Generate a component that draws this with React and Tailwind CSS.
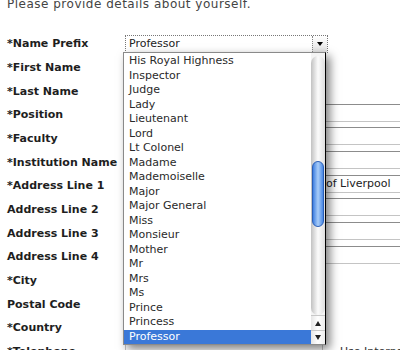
import React from "react";

const items = [
  "His Royal Highness",
  "Inspector",
  "Judge",
  "Lady",
  "Lieutenant",
  "Lord",
  "Lt Colonel",
  "Madame",
  "Mademoiselle",
  "Major",
  "Major General",
  "Miss",
  "Monsieur",
  "Mother",
  "Mr",
  "Mrs",
  "Ms",
  "Prince",
  "Princess",
  "Professor",
];

const rows = [
  { label: "*Name Prefix", kind: "select" },
  { label: "*First Name", w: "w-[198px]" },
  { label: "*Last Name", w: "w-[198px]" },
  { label: "*Position", w: "w-[300px]" },
  { label: "*Faculty", w: "w-[300px]" },
  { label: "*Institution Name", w: "w-[300px]" },
  { label: "*Address Line 1", w: "w-[300px]", value: "University of Liverpool" },
  { label: "Address Line 2", w: "w-[300px]" },
  { label: "Address Line 3", w: "w-[300px]" },
  { label: "Address Line 4", w: "w-[300px]" },
  { label: "*City", w: "w-[198px]" },
  { label: "Postal Code", w: "w-[198px]" },
  { label: "*Country", w: "w-[198px]" },
  { label: "*Telephone", w: "w-[198px]", hint: "Use International format" },
];

function Field({ row }) {
  if (row.kind === "select") {
    return (
      <div className="flex h-[18px] w-[203px] shrink-0 border border-dotted border-[#777] bg-white">
        <div className="flex-1 pl-[3px] text-[11px] leading-[16px] text-[#222]">Professor</div>
        <div className="flex w-[15px] items-center justify-center border-l border-dotted border-[#888] bg-gradient-to-b from-white to-[#e4e4e4]">
          <div className="h-0 w-0 border-l-[3px] border-r-[3px] border-t-[4px] border-l-transparent border-r-transparent border-t-black" />
        </div>
      </div>
    );
  }
  return (
    <div
      className={`-mt-[4px] h-[18px] shrink-0 overflow-hidden whitespace-nowrap border border-[#c4c4c4] border-t-[#8c8c8c] bg-white text-[11px] leading-[16px] text-[#222] ${row.w} ${row.value ? "pl-[141px]" : ""}`}
    >
      {row.value || ""}
    </div>
  );
}

export default function App() {
  return (
    <div className="relative h-[350px] w-[400px] overflow-hidden bg-white font-['DejaVu_Sans',sans-serif]">
      <p className="-mt-[2px] h-[13px] whitespace-nowrap pl-[7px] text-[12px] leading-[13px] tracking-[0.5px] text-[#444]">
        Please provide details about yourself.
      </p>
      <div className="mt-[21px] flex flex-col">
        {rows.map((row) => (
          <div key={row.label} className="flex h-[23.67px] shrink-0 items-center">
            <div className="w-[125px] shrink-0 whitespace-nowrap pl-[7px] text-[11px] font-bold leading-[13px] text-[#1e1e1e]">
              {row.label}
            </div>
            <Field row={row} />
            {row.hint && (
              <div className="ml-[17px] whitespace-nowrap text-[11px] leading-[13px] text-[#333]">{row.hint}</div>
            )}
          </div>
        ))}
      </div>

      {/* dropdown list overlay */}
      <div className="absolute left-[123px] top-[52px] flex h-[293px] w-[203px] border border-[#8a8a8a] border-r-black bg-white shadow-[4px_4px_9px_rgba(0,0,0,0.5)]">
        <div className="flex flex-1 flex-col pt-[1px]">
          {items.map((it) => (
            <div
              key={it}
              className={
                it === "Professor"
                  ? "h-[14.5px] shrink-0 whitespace-nowrap bg-[#3a78d8] pl-[5px] text-[11px] leading-[14.5px] text-white"
                  : "h-[14.5px] shrink-0 whitespace-nowrap pl-[5px] text-[11px] leading-[14.5px] text-[#2a2a2a]"
              }
            >
              {it}
            </div>
          ))}
        </div>
        {/* scrollbar */}
        <div className="flex w-[14px] shrink-0 flex-col bg-[#f4f4f4]">
          <div className="relative mt-[3px] flex-1 rounded-b-[7px] rounded-t-[7px] bg-gradient-to-r from-[#c2c2c2] via-[#fbfbfb] to-[#dedede]">
            <div className="absolute left-[1px] top-[105px] h-[66px] w-[12px] rounded-[6px] border border-[#2a5fb8] bg-gradient-to-r from-[#3f7fe0] via-[#a9cdf8] to-[#4a88e4]" />
          </div>
          <div className="flex h-[15px] items-center justify-center border-t border-[#c8c8c8] bg-gradient-to-r from-[#e6e6e6] via-white to-[#ececec]">
            <div className="h-0 w-0 border-b-[5px] border-l-[3px] border-r-[3px] border-b-[#222] border-l-transparent border-r-transparent" />
          </div>
          <div className="flex h-[14px] items-center justify-center border-t border-[#c8c8c8] bg-gradient-to-r from-[#e6e6e6] via-white to-[#ececec]">
            <div className="h-0 w-0 border-l-[3px] border-r-[3px] border-t-[5px] border-l-transparent border-r-transparent border-t-[#222]" />
          </div>
        </div>
      </div>
    </div>
  );
}
